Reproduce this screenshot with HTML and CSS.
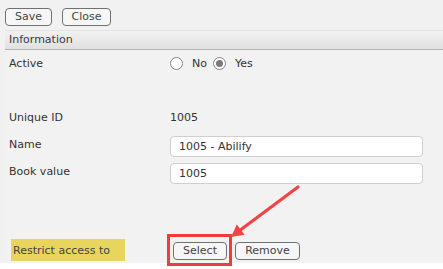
FILE: index.html
```html
<!DOCTYPE html>
<html>
<head>
<meta charset="utf-8">
<link rel="stylesheet" href="styles.css">
</head>
<body>
<div class="page">
  <div class="toolbar">
    <button class="btn btn-save">Save</button>
    <button class="btn btn-close">Close</button>
  </div>
  <div class="panel">
    <div class="panel-head">Information</div>
    <div class="panel-body">
      <div class="row">
        <div class="label">Active</div>
        <div class="value radios">
          <span class="radio"></span><span class="rlabel">No</span>
          <span class="radio checked"></span><span class="rlabel">Yes</span>
        </div>
      </div>
      <div class="row"></div>
      <div class="row">
        <div class="label">Unique ID</div>
        <div class="value">1005</div>
      </div>
      <div class="row">
        <div class="label">Name</div>
        <div class="value"><div class="input">1005 - Abilify</div></div>
      </div>
      <div class="row">
        <div class="label">Book value</div>
        <div class="value"><div class="input">1005</div></div>
      </div>
      <div class="spacer"></div>
      <div class="row last">
        <div class="label"><span class="highlight">Restrict access to</span></div>
        <div class="value buttons">
          <button class="btn btn-select">Select</button>
          <button class="btn btn-remove">Remove</button>
        </div>
      </div>
    </div>
  </div>
  <div class="redbox"></div>
  <svg class="arrow" width="443" height="269" viewBox="0 0 443 269">
    <line x1="298" y1="187" x2="239" y2="231" stroke="#f24444" stroke-width="3.2" stroke-linecap="round"/>
    <polygon points="231,237 244.5,234.8 236.8,224.6" fill="#f24444"/>
  </svg>
</div>
</body>
</html>
```

FILE: styles.css
```css
html, body {
  margin: 0;
  padding: 0;
  background: #ffffff;
}
body {
  font-family: "DejaVu Sans", Verdana, sans-serif;
  font-size: 11px;
  color: #333;
  width: 443px;
  height: 269px;
  overflow: hidden;
}
.page {
  position: relative;
  width: 443px;
  height: 263px;
  background: #f1f1f1;
}
.toolbar {
  display: flex;
  gap: 10px;
  padding: 8px 0 0 5px;
  height: 22px;
}
.btn {
  font-family: "DejaVu Sans", Verdana, sans-serif;
  font-size: 11px;
  color: #444;
  background: #f6f6f6;
  border: 1px solid #707070;
  border-radius: 4px;
  height: 18px;
  padding: 0;
  margin: 0;
  line-height: 16px;
  box-sizing: border-box;
}
.btn-save { width: 47px; }
.btn-close { width: 49px; }
.btn-select { width: 54px; }
.btn-remove { width: 65px; }
.panel {
  margin-left: 5px;
  background: #f2f2f2;
  border-radius: 0 0 0 6px;
  height: 233px;
}
.panel-head {
  padding-left: 4px;
  background: linear-gradient(#f1f1f1, #e1e1e1);
  border-top: 1px solid #e4e4e4;
  border-bottom: 1px solid #b4b4b4;
  height: 18px;
  line-height: 18px;
  color: #3a3a3a;
}
.panel-body {
  padding-left: 4px;
}
.row {
  display: flex;
  height: 27px;
  align-items: center;
}
.label {
  width: 161px;
  flex: none;
}
.value {
  flex: 1;
}
.radios {
  display: flex;
  align-items: center;
}
.radio {
  width: 13px;
  height: 13px;
  box-sizing: border-box;
  border: 1px solid #858585;
  border-radius: 50%;
  background: #fff;
  display: inline-block;
  position: relative;
}
.radio.checked::after {
  content: "";
  position: absolute;
  left: 2px;
  top: 2px;
  width: 7px;
  height: 7px;
  border-radius: 50%;
  background: #7a7a7a;
}
.rlabel {
  margin-left: 9px;
  margin-right: 6px;
}
.input {
  width: 253px;
  height: 21px;
  box-sizing: border-box;
  background: #fff;
  border: 1px solid #cfcfcf;
  border-radius: 4px;
  padding-left: 8px;
  line-height: 19px;
  color: #333;
  margin-top: 3px;
}
.spacer {
  height: 54px;
}
.row.last {
  height: 22px;
}
.highlight {
  display: inline-block;
  margin-left: 2px;
  width: 114px;
  height: 22px;
  line-height: 24px;
  padding-left: 2px;
  box-sizing: border-box;
  background: #e8d55e;
  color: #444;
}
.buttons {
  display: flex;
  gap: 8px;
  padding-left: 3px;
  margin-top: 2px;
}
.redbox {
  position: absolute;
  left: 167px;
  top: 234px;
  width: 65px;
  height: 32px;
  box-sizing: border-box;
  border: 3px solid #f03c3c;
}
.arrow {
  position: absolute;
  left: 0;
  top: 0;
}
```
